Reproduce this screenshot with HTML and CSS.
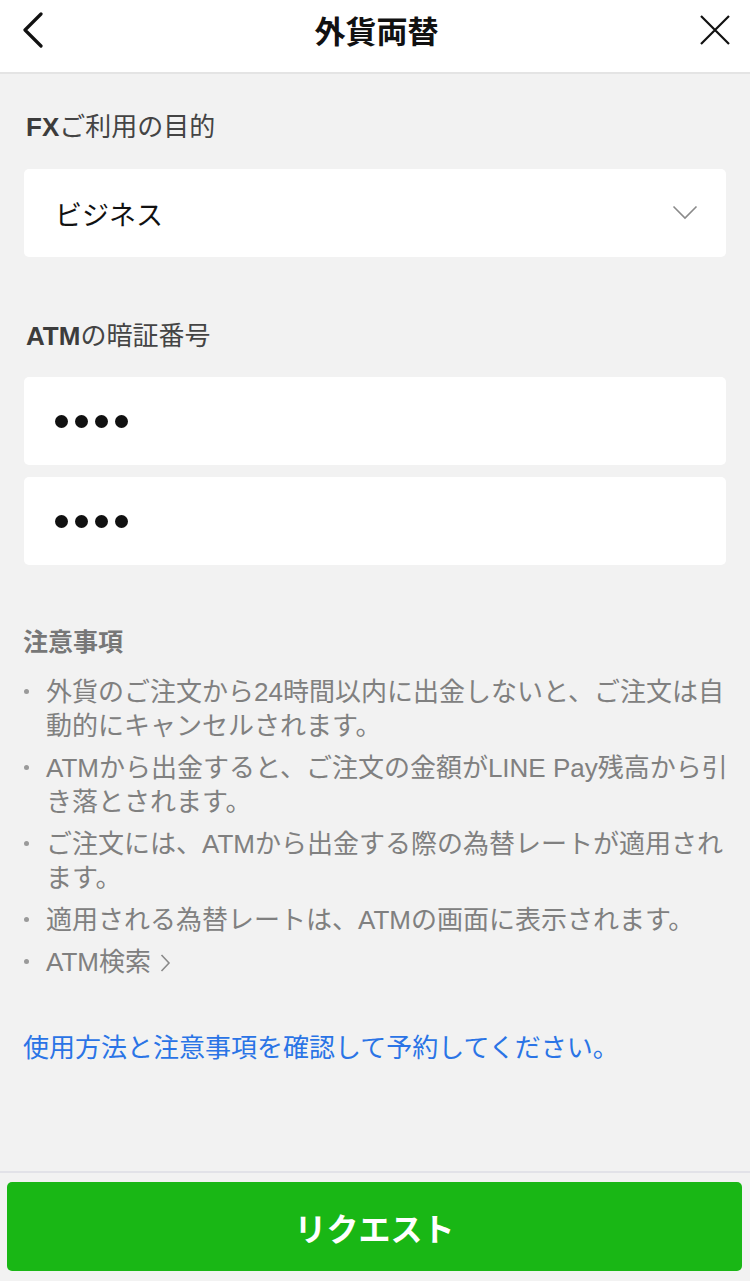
FILE: index.html
```html
<!DOCTYPE html>
<html lang="ja">
<head>
<meta charset="utf-8">
<title>外貨両替</title>
<link rel="stylesheet" href="styles.css">
</head>
<body>
<header class="topbar">
  <div class="topbar-left">
    <svg class="icon-back" width="24" height="36" viewBox="0 0 24 36"><polyline points="19,2 3,18 19,34" fill="none" stroke="#111" stroke-width="3.2" stroke-linecap="round" stroke-linejoin="round"/></svg>
  </div>
  <h1 class="title">外貨両替</h1>
  <div class="topbar-right">
    <svg class="icon-close" width="32" height="32" viewBox="0 0 32 32"><path d="M2 2 L30 30 M30 2 L2 30" fill="none" stroke="#111" stroke-width="2.2"/></svg>
  </div>
</header>

<main class="content">
  <div class="label label-first"><b>FX</b>ご利用の目的</div>
  <div class="field select">
    <span class="select-text">ビジネス</span>
    <svg class="chevron" width="26" height="15" viewBox="0 0 26 15"><polyline points="1.5,1.5 13,13 24.5,1.5" fill="none" stroke="#8a8a8a" stroke-width="1.6"/></svg>
  </div>

  <div class="label label-second"><b>ATM</b>の暗証番号</div>
  <div class="field pin">
    <span class="dot"></span><span class="dot"></span><span class="dot"></span><span class="dot"></span>
  </div>
  <div class="field pin pin-second">
    <span class="dot"></span><span class="dot"></span><span class="dot"></span><span class="dot"></span>
  </div>

  <h2 class="notes-title">注意事項</h2>
  <ul class="notes">
    <li>外貨のご注文から24時間以内に出金しないと、ご注文は自動的にキャンセルされます。</li>
    <li>ATMから出金すると、ご注文の金額がLINE Pay残高から引き落とされます。</li>
    <li>ご注文には、ATMから出金する際の為替レートが適用されます。</li>
    <li>適用される為替レートは、ATMの画面に表示されます。</li>
    <li>ATM検索 <svg class="arrow" width="11" height="20" viewBox="0 0 11 20"><polyline points="1.5,2 9,10 1.5,18" fill="none" stroke="#8a8a8a" stroke-width="1.6"/></svg></li>
  </ul>

  <p class="link">使用方法と注意事項を確認して予約してください。</p>
</main>

<footer class="bottombar">
  <button class="request">リクエスト</button>
</footer>
</body>
</html>
```

FILE: styles.css
```css
* { box-sizing: border-box; }

html, body {
  margin: 0;
  padding: 0;
}

body {
  background: #f2f2f2;
  font-family: "Liberation Sans", "Noto Sans CJK JP", sans-serif;
  min-height: 100vh;
  display: flex;
  flex-direction: column;
}

.topbar {
  height: 74px;
  background: #ffffff;
  border-bottom: 2px solid #e4e4e4;
  display: grid;
  grid-template-columns: 1fr auto 1fr;
  align-items: center;
  padding: 0 19px 12px 22px;
}

.topbar-left { display: flex; justify-content: flex-start; }
.topbar-right { display: flex; justify-content: flex-end; }
.icon-back, .icon-close { display: block; }

.title {
  margin: 0;
  font-family: "Noto Sans CJK JP", sans-serif;
  font-size: 31px;
  font-weight: 700;
  color: #111;
  line-height: 40px;
}

.content {
  flex: 1;
  padding: 0 24px 0 24px;
}

.label {
  font-size: 26px;
  line-height: 40px;
  color: #444;
  padding-left: 2px;
}
.label b { font-weight: 700; color: #3c3c3c; }
.label-first { margin-top: 33px; }
.label-second { margin-top: 59px; }

.field {
  background: #ffffff;
  border-radius: 5px;
  height: 88px;
  display: flex;
  align-items: center;
  margin-top: 22px;
}

.select {
  padding: 0 28px 0 31px;
  justify-content: space-between;
}
.select-text {
  font-family: "Noto Sans CJK JP", sans-serif;
  font-size: 27px;
  color: #111;
}
.chevron { display: block; margin-top: -2px; }

.pin {
  padding-left: 31px;
  gap: 7px;
  margin-top: 21px;
}
.pin-second { margin-top: 12px; }
.dot {
  width: 13px;
  height: 13px;
  border-radius: 50%;
  background: #111;
}

.notes-title {
  margin: 55px 0 0 -1px;
  font-family: "Noto Sans CJK JP", sans-serif;
  font-size: 25px;
  font-weight: 700;
  line-height: 40px;
  color: #777;
}

.notes {
  list-style: none;
  margin: 15px -10px 0 0;
  padding: 0;
  display: flex;
  flex-direction: column;
  gap: 8px;
}
.notes li {
  position: relative;
  padding-left: 22px;
  font-size: 26px;
  line-height: 34px;
  color: #808080;
}
.notes li::before {
  content: "";
  position: absolute;
  left: 0;
  top: 14px;
  width: 5px;
  height: 5px;
  border-radius: 50%;
  background: #9a9a9a;
}
.arrow {
  display: inline-block;
  vertical-align: -2px;
  margin-left: 2px;
}

.link {
  margin: 49px 0 0 -1px;
  font-size: 26px;
  line-height: 40px;
  color: #2a74e6;
}

.bottombar {
  border-top: 2px solid #e2e2e8;
  padding: 9px 8px 10px 7px;
}

.request {
  display: block;
  width: 100%;
  height: 89px;
  border: none;
  border-radius: 5px;
  background: #19b715;
  color: #ffffff;
  font-family: "Noto Sans CJK JP", sans-serif;
  font-size: 32px;
  font-weight: 700;
  letter-spacing: 0;
}
```
